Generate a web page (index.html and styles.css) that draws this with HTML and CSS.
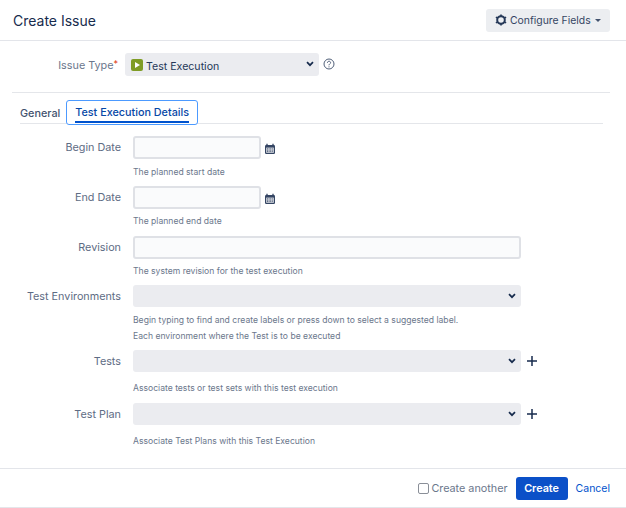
FILE: index.html
```html
<!DOCTYPE html>
<html lang="en">
<head>
<meta charset="utf-8">
<title>Create Issue</title>
<link rel="stylesheet" href="styles.css">
</head>
<body>
<div class="dialog">
  <header class="head">
    <h1 class="title">Create Issue</h1>
    <button class="config">
      <svg class="gear" viewBox="0 0 12 12" width="12" height="12"><circle cx="6" cy="6" r="3.8" fill="none" stroke="#253858" stroke-width="2"/><path d="M6 .4v2M6 9.6v2M.9 3.1l1.8 1M9.3 7.9l1.8 1M.9 8.9l1.8-1M9.3 4.1l1.8-1" stroke="#253858" stroke-width="1.6"/></svg>
      <span class="config-text">Configure Fields</span>
      <i class="caret"></i>
    </button>
  </header>
  <main class="body">
    <div class="type-row">
      <label class="type-label">Issue Type<em>*</em></label>
      <div class="fake-select type-select">
        <svg class="type-icon" viewBox="0 0 12 12" width="12" height="12"><rect width="12" height="12" rx="2" fill="#7f9c25"/><path d="M4 3l5 3-5 3z" fill="#fff"/></svg>
        <span class="type-text">Test Execution</span>
        <svg class="chev" viewBox="0 0 8 6" width="8" height="6"><path d="M1 1.2l3 3 3-3" fill="none" stroke="#172b4d" stroke-width="1.7"/></svg>
      </div>
      <svg class="help" viewBox="0 0 12 12" width="12" height="12"><circle cx="6" cy="6" r="5" fill="none" stroke="#505f79" stroke-width="1"/><path d="M4.4 4.8c0-2.1 3.2-2.1 3.2-.1 0 1.2-1.6 1.2-1.6 2.6" fill="none" stroke="#505f79"/><circle cx="6" cy="8.8" r=".6" fill="#505f79"/></svg>
    </div>
    <div class="tabs">
      <span class="tab">General</span>
      <span class="tab active"><span class="tab-text">Test Execution Details</span></span>
    </div>
    <div class="field date-field">
      <label class="lbl">Begin Date</label>
      <div class="ctl">
        <div class="line"><div class="input short"></div>
          <svg class="cal" viewBox="0 0 12 12" width="12" height="12"><rect x="1" y="2" width="10" height="9" rx="1.2" fill="#344563"/><rect x="2.2" y="4.6" width="7.6" height="5.2" fill="#dfe1e6"/><path d="M3 .8v2M9 .8v2" stroke="#344563" stroke-width="1.3"/><path d="M3 5.8h6M3 7.2h6M3 8.6h6" stroke="#344563" stroke-width=".8" stroke-dasharray="1 .6"/></svg>
        </div>
        <p class="hint hint-date">The planned start date</p>
      </div>
    </div>
    <div class="field date-field">
      <label class="lbl">End Date</label>
      <div class="ctl">
        <div class="line"><div class="input short"></div>
          <svg class="cal" viewBox="0 0 12 12" width="12" height="12"><rect x="1" y="2" width="10" height="9" rx="1.2" fill="#344563"/><rect x="2.2" y="4.6" width="7.6" height="5.2" fill="#dfe1e6"/><path d="M3 .8v2M9 .8v2" stroke="#344563" stroke-width="1.3"/><path d="M3 5.8h6M3 7.2h6M3 8.6h6" stroke="#344563" stroke-width=".8" stroke-dasharray="1 .6"/></svg>
        </div>
        <p class="hint">The planned end date</p>
      </div>
    </div>
    <div class="field">
      <label class="lbl">Revision</label>
      <div class="ctl">
        <div class="line"><div class="input wide"></div></div>
        <p class="hint">The system revision for the test execution</p>
      </div>
    </div>
    <div class="field env-field">
      <label class="lbl">Test Environments</label>
      <div class="ctl">
        <div class="line"><div class="fake-select wide"><svg class="chev" viewBox="0 0 8 6" width="8" height="6"><path d="M1 1.2l3 3 3-3" fill="none" stroke="#172b4d" stroke-width="1.7"/></svg></div></div>
        <p class="hint hint-date">Begin typing to find and create labels or press down to select a suggested label.</p>
        <p class="hint hint-second">Each environment where the Test is to be executed</p>
      </div>
    </div>
    <div class="field tests-field">
      <label class="lbl">Tests</label>
      <div class="ctl">
        <div class="line"><div class="fake-select wide"><svg class="chev" viewBox="0 0 8 6" width="8" height="6"><path d="M1 1.2l3 3 3-3" fill="none" stroke="#172b4d" stroke-width="1.7"/></svg></div>
          <svg class="plus" viewBox="0 0 10 10" width="10" height="10"><path d="M5 0v10M0 5h10" stroke="#172b4d" stroke-width="1.5"/></svg></div>
        <p class="hint hint-tests">Associate tests or test sets with this test execution</p>
      </div>
    </div>
    <div class="field tests-field">
      <label class="lbl">Test Plan</label>
      <div class="ctl">
        <div class="line"><div class="fake-select wide"><svg class="chev" viewBox="0 0 8 6" width="8" height="6"><path d="M1 1.2l3 3 3-3" fill="none" stroke="#172b4d" stroke-width="1.7"/></svg></div>
          <svg class="plus" viewBox="0 0 10 10" width="10" height="10"><path d="M5 0v10M0 5h10" stroke="#172b4d" stroke-width="1.5"/></svg></div>
        <p class="hint hint-tests">Associate Test Plans with this Test Execution</p>
      </div>
    </div>
  </main>
  <footer class="foot">
    <label class="another"><span class="box"></span>Create another</label>
    <button class="create">Create</button>
    <a class="cancel">Cancel</a>
  </footer>
</div>
</body>
</html>
```
FILE: styles.css
```css
* { box-sizing: border-box; }
html, body { margin: 0; padding: 0; background: #fff; }
body { width: 626px; height: 508px; overflow: hidden; font-family: Inter, "Liberation Sans", sans-serif; color: #172b4d; }
.dialog { display: flex; flex-direction: column; height: 508px; border-bottom: 1px solid #e4e6ea; }
.head { height: 41px; flex: none; display: flex; align-items: center; justify-content: space-between; padding: 0 16px 0 13px; border-bottom: 1px solid #e3e5ea; }
.title { margin: 0; font-size: 14px; font-weight: 400; color: #172b4d; }
.config { display: flex; align-items: center; gap: 3px; height: 23px; width: 124px; padding: 0 0 0 9px; border: 0; border-radius: 3px; background: #eceef1; font: 400 10.4px Inter, "Liberation Sans", sans-serif; color: #344563; }
.config-text { padding-top: 1px; }
.caret { width: 0; height: 0; margin-left: 1px; border: 3px solid transparent; border-top-color: #42526e; border-bottom: 0; }
.body { flex: 1; padding: 0; }
.type-row { display: flex; align-items: center; height: 52px; margin: 0 16px 0 12px; padding-bottom: 4px; border-bottom: 1px solid #e4e6ea; }
.type-label { width: 106px; text-align: right; font-size: 10.8px; color: #6b778c; white-space: nowrap; }
.type-label em { color: #de350b; font-style: normal; font-size: 9px; vertical-align: 2px; }
.fake-select { position: relative; display: flex; align-items: center; height: 22px; border-radius: 3px; background: #ebecf0; }
.type-select { width: 194px; height: 23px; margin-left: 7px; padding-left: 6px; font-size: 10.6px; color: #253858; }
.type-icon { margin-right: 3px; }
.type-text { padding-top: 3px; }
.chev { position: absolute; right: 5px; top: 8px; }
.help { margin-left: 4px; margin-bottom: 2px; }
.tabs { display: flex; height: 24px; margin: 7px 23px 12px 20px; border-bottom: 1px solid #e4e6ea; font-size: 10.8px; font-weight: 500; color: #42526e; }
.tab { display: flex; align-items: center; height: 25px; flex: none; padding-top: 1px; }
.active { margin-left: 6px; padding: 0 8px; border: 1px solid #4c9aff; border-radius: 3px; background: #fff; color: #0747a6; }
.tab-text { height: 22px; display: flex; align-items: center; border-bottom: 2px solid #0052cc; margin-bottom: 1px; padding-top: 3px; }
.field { display: flex; min-height: 49px; }
.date-field { height: 50px; }
.lbl { width: 121px; flex: none; padding-top: 5px; text-align: right; font-size: 10.8px; font-weight: 400; color: #5e6c84; white-space: nowrap; }
.ctl { margin-left: 12px; }
.line { display: flex; align-items: center; }
.input { height: 23px; border: 2px solid #dfe1e6; border-radius: 3px; background: #fafbfc; }
.short { width: 128px; }
.wide { width: 388px; }
.cal { margin: 2px 0 0 3px; }
.plus { margin-left: 6px; }
.hint { margin: 6px 0 0; font-size: 8.6px; line-height: 12px; color: #6b778c; white-space: nowrap; }
.hint-date { margin-top: 7px; }
.hint-second { margin-top: 4px; }
.hint-tests { margin-top: 10px; }
.env-field { height: 65px; }
.tests-field { height: 53px; }
.foot { display: flex; align-items: center; justify-content: flex-end; height: 39px; flex: none; padding: 0 16px 0 0; border-top: 1px solid #e3e5ea; }
.another { display: flex; align-items: center; font-size: 10.8px; color: #6b778c; }
.box { width: 11px; height: 11px; margin-right: 2px; border: 1px solid #8a8f98; border-radius: 2px; background: #fff; }
.create { width: 52px; height: 23px; margin-left: 8px; border: 0; border-radius: 3px; background: #0b50c8; color: #fff; font: 600 10.8px Inter, "Liberation Sans", sans-serif; }
.cancel { margin-left: 8px; font-size: 10.5px; color: #0052cc; }
```
